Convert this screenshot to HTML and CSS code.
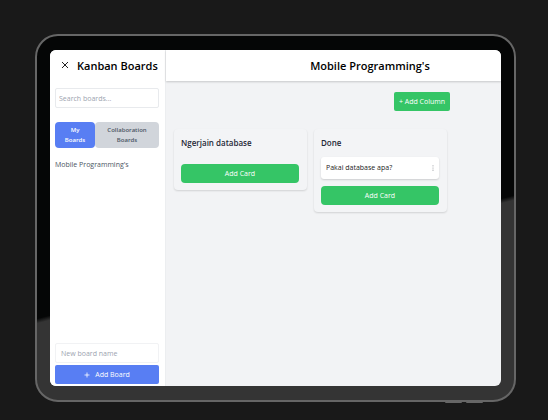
FILE: index.html
```html
<!DOCTYPE html>
<html lang="en">
<head>
<meta charset="utf-8">
<title>Kanban Boards</title>
<link rel="stylesheet" href="styles.css">
</head>
<body>
<div class="device">
  <div class="screen">
    <aside class="sidebar">
      <div class="brand">
        <button class="close" type="button" aria-label="Close sidebar">
          <svg viewBox="0 0 8 8" width="8" height="8"><path d="M1 1l6 6M7 1l-6 6" fill="none" stroke="#222" stroke-width="1"/></svg>
        </button>
        <h1 class="title">Kanban Boards</h1>
      </div>
      <input class="field search" type="text" placeholder="Search boards..." aria-label="Search boards">
      <div class="tabs">
        <button class="tab tab-active" type="button">My Boards</button>
        <button class="tab tab-wide" type="button">Collaboration Boards</button>
      </div>
      <nav class="boards"><a class="board-link" href="#">Mobile Programming's</a></nav>
      <form class="new-board">
        <input class="field name" type="text" placeholder="New board name" aria-label="New board name">
        <button class="add-board" type="button">
          <svg viewBox="0 0 6 6" width="6" height="6"><path d="M3 0.5v5M0.5 3h5" fill="none" stroke="#fff" stroke-width="0.8"/></svg>
          Add Board
        </button>
      </form>
    </aside>
    <main class="main">
      <header class="header"><h2 class="title">Mobile Programming's</h2></header>
      <div class="toolbar"><button class="add-column" type="button">+ Add Column</button></div>
      <div class="columns">
        <section class="column">
          <h3 class="column-title">Ngerjain database</h3>
          <button class="add-card" type="button">Add Card</button>
        </section>
        <section class="column">
          <h3 class="column-title">Done</h3>
          <article class="card">
            <span>Pakai database apa?</span>
            <button class="more" type="button" aria-label="Card menu">
              <svg viewBox="0 0 2 8" width="2" height="8"><g fill="#9a9da3"><circle cx="1" cy="1.8" r=".6"/><circle cx="1" cy="4" r=".6"/><circle cx="1" cy="6.2" r=".6"/></g></svg>
            </button>
          </article>
          <button class="add-card" type="button">Add Card</button>
        </section>
      </div>
    </main>
  </div>
  <div class="side-keys"><i class="key"></i><i class="key"></i></div>
</div>
</body>
</html>
```
FILE: styles.css
```css
* { box-sizing: border-box; }
body {
  margin: 0;
  min-height: 100vh;
  padding: 34px 32px 18px 35px;
  display: flex;
  background: #191919;
  font: 7px/10px "Open Sans", "Noto Sans", sans-serif;
  color: #374151;
}
button, input { font: inherit; margin: 0; }
button { border: 0; padding: 0; cursor: pointer; color: #fff; background: none; }
svg { display: block; flex: none; }
h1, h2, h3 { margin: 0; }

.device {
  position: relative;
  flex: 1;
  display: flex;
  padding: 14px 13px 14px 13px;
  border: 2px solid #666;
  border-radius: 23px;
  background: linear-gradient(165.5deg, #050606 58%, #343434 59%);
}
.screen {
  flex: 1;
  display: flex;
  min-width: 0;
  overflow: hidden;
  border-radius: 6px;
  background: #f2f3f5;
}
.side-keys {
  position: absolute;
  right: 31px;
  bottom: -3px;
  display: flex;
  gap: 4px;
}
.key { width: 17px; height: 2px; border-radius: 1px; background: #666; }

.sidebar {
  flex: none;
  width: 116px;
  padding: 5px 6px 2px 5px;
  display: flex;
  flex-direction: column;
  background: #fff;
  border-right: 1px solid #eceef0;
}
.brand { display: flex; align-items: center; gap: 8px; height: 20px; padding-left: 6px; }
.title { font-size: 11px; line-height: 15px; font-weight: 600; color: #000; white-space: nowrap; }
.field {
  width: 100%;
  height: 20px;
  padding: 0 3px;
  border: 1px solid #e8eaed;
  border-radius: 2px;
  background: #fff;
  color: #374151;
}
.field::placeholder { color: #9ca3af; opacity: 1; }
.search { margin-top: 13px; }
.name { padding: 0 5px; border-color: #f1f2f4; }
.tabs { display: flex; margin-top: 14px; }
.tab {
  height: 26px;
  padding: 0 8px;
  border-radius: 4px;
  background: #d1d5db;
  color: #4b5563;
  font-size: 6px;
  font-weight: 600;
}
.tab-wide { flex: 1; }
.tab-active { width: 40px; background: #587ef3; color: #fff; }
.boards { margin-top: 12px; flex: 1; }
.board-link { color: #4b5563; text-decoration: none; }
.new-board { display: flex; flex-direction: column; gap: 2px; }
.add-board {
  height: 19px;
  display: flex;
  align-items: center;
  justify-content: center;
  gap: 5px;
  border-radius: 2px;
  background: #587ef3;
}

.main { flex: 1; min-width: 0; }
.header {
  height: 31px;
  padding-left: 73px;
  display: flex;
  align-items: center;
  justify-content: center;
  background: #fff;
  box-shadow: 0 1px 2px rgba(0, 0, 0, .18);
}
.toolbar { display: flex; justify-content: flex-end; padding: 11px 51px 0 0; }
.add-column { width: 56px; height: 19px; border-radius: 2px; background: #35c566; white-space: nowrap; }
.columns { display: flex; align-items: flex-start; gap: 7px; padding: 18px 54px 0 8px; }
.column {
  flex: 1;
  padding: 7px 8px 7px 7px;
  display: flex;
  flex-direction: column;
  gap: 7px;
  border-radius: 4px;
  background: #f3f4f6;
  box-shadow: 0 1px 2px rgba(0, 0, 0, .14);
}
.column-title { font-size: 8px; line-height: 14px; font-weight: 600; color: #1f2937; }
.card {
  height: 22px;
  padding: 0 5px;
  display: flex;
  align-items: center;
  justify-content: space-between;
  border-radius: 3px;
  background: #fff;
  color: #222;
  box-shadow: 0 1px 2px rgba(0, 0, 0, .16);
}
.add-card { height: 19px; border-radius: 4px; background: #35c566; }
.column-title + .add-card { margin-top: 7px; }
```
